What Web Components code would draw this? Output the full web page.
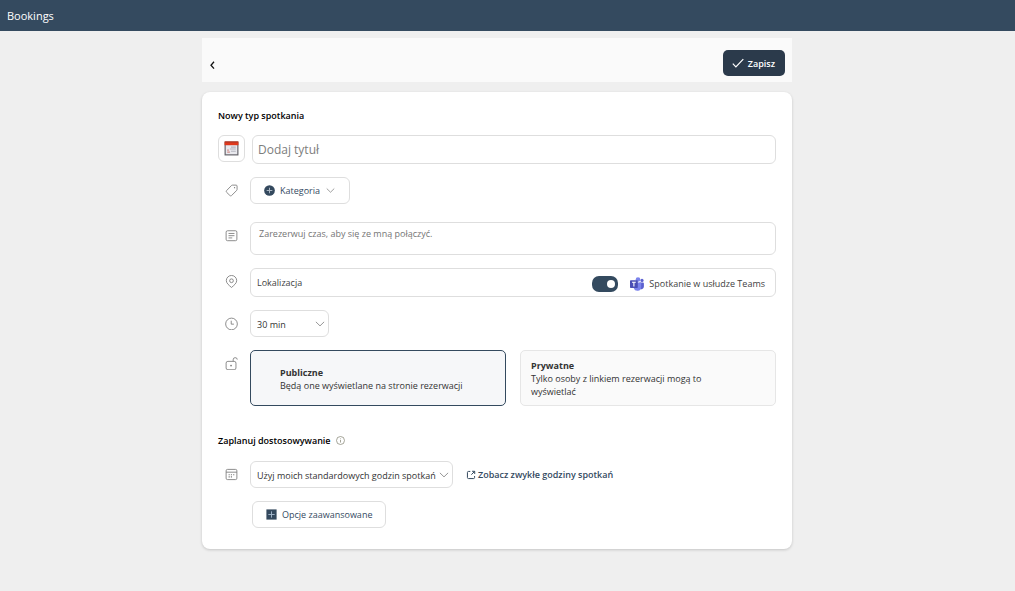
<!DOCTYPE html>
<html lang="pl">
<head>
<meta charset="utf-8">
<title>Bookings</title>
<meta name="viewport" content="width=device-width, initial-scale=1">
<style>
  :root {
    --brand: #344a5f;
    --brand-dark: #2b3a4b;
    --ink: #242424;
    --ink-soft: #424242;
    --muted: #757575;
    --line: #dedede;
    --radius: 6px;
  }
  * { box-sizing: border-box; }
  body {
    margin: 0;
    min-height: 100vh;
    background: #efefef;
    color: var(--ink);
    font: 400 9px/13px "Open Sans", "Noto Sans", sans-serif;
  }
</style>
</head>
<body>
<bookings-app></bookings-app>

<script>
const base = `*, *::before, *::after { box-sizing: border-box; }
  button, input, select, textarea { font: inherit; color: inherit; margin: 0; }`;

function define(name, html, setup) {
  const template = document.createElement('template');
  template.innerHTML = html.replace('<style>', '<style>' + base);
  customElements.define(name, class extends HTMLElement {
    constructor() {
      super();
      this.attachShadow({ mode: 'open' }).append(template.content.cloneNode(true));
    }
    connectedCallback() { if (setup) setup(this, this.shadowRoot); }
  });
}

/* Outline icons, drawn on a 14 x 14 grid */
const icons = {
  back: '<path d="M9 3.800 6 7.200l3 3.400" stroke="#111" stroke-width="1.300"/>',
  check: '<path d="m1.8 7.6 3.1 3.2 7.4-7.6" stroke="#fff" stroke-width="1.2"/>',
  calendar: '<path d="M.5.5h13v13H.5z" fill="#65646b" stroke="none"/><path d="M1.6 3.8h10.800v8.600H1.600z" fill="#e9e9ee" stroke="none"/><path d="M.5.5h13v3.400H.5z" fill="#e0381c" stroke="none"/><path d="M1 1h12" stroke="#a93a2c"/><path d="M3 10.400h2.500M3 8.600h1.500" stroke="#cf8a86" stroke-width="1.200"/><path d="M6.500 9.500h4.500M5.500 7.500h5.500M6.500 5.700h4.500" stroke="#b5b6c0" stroke-width="1"/>',
  tag: '<path d="M8 1.200h4c.6 0 1 .4 1 1v3.700c0 .4-.1.700-.4 1l-5.400 5.400c-.6.600-1.400.6-2 0L1.800 9c-.6-.6-.6-1.400 0-2L7 1.600c.3-.3.600-.4 1-.4z"/><circle cx="10.300" cy="4" r=".7" fill="#777" stroke="none"/>',
  note: '<rect x="1.200" y="1.900" width="11.600" height="10.700" rx="1.500"/><path d="M3.800 4.800h6.400M3.800 7.200h6.400M3.800 9.600h4"/>',
  pin: '<path d="M7 13.400C4.400 11.200 1.400 8.900 1.400 6.100a5.600 5.600 0 0 1 11.200 0c0 2.800-3 5.100-5.600 7.300z"/><circle cx="7" cy="6.200" r="2"/>',
  clock: '<circle cx="7" cy="7.500" r="6.300"/><path d="M6.700 4v3.700h2.900"/>',
  lock: '<rect x="1.200" y="4.700" width="10.600" height="9" rx="1.900"/><path d="M8.800 4.700V3a2.200 2.200 0 0 1 4.400-.2"/><circle cx="6.500" cy="9.200" r=".9" fill="#777" stroke="none"/>',
  schedule: '<rect x="1.200" y="1.500" width="11.600" height="11" rx="1.500"/><path d="M1.200 4.500h11.600"/><path d="M6.300 7.200h1.200M8.800 7.200H10M3.900 7.200h1.200M3.900 9.600h1.200M6.300 9.600h1.200" stroke-width="1.200"/>',
  down: '<path d="m2.200 4.500 4.800 4.700 4.800-4.700"/>',
  info: '<circle cx="7" cy="7" r="6.200" stroke="#8a8a7a" stroke-width="1.200"/><path d="M7 6.200v4M7 3.800v1.200" stroke="#8a8a7a" stroke-width="1.200"/>',
  plus: '<circle cx="7" cy="7" r="6.800" fill="#34495e" stroke="none"/><path d="M7 3.400v7.200M3.400 7h7.200" stroke="#a9b5c1" stroke-width="1.300"/>',
  plusbox: '<path d="M.5.5h13v13H.5z" fill="#34495e" stroke="none"/><path d="M7 3v8M3 7h8" stroke="#a4b8cc" stroke-width="1.200"/>',
  open: '<path d="M6 2H3.500C2.500 2 2 2.500 2 3.500v7c0 1 .5 1.500 1.500 1.500h7c1 0 1.500-.5 1.500-1.500V8.500M8.500 1.800h3.700v3.700M12 2 7.500 6.500" stroke="#34495e" stroke-width="1.400"/>',
  teams: '<circle cx="12" cy="3.400" r="1.600" fill="#5b60cf" stroke="none"/><circle cx="8" cy="2.500" r="2.300" fill="#7b83eb" stroke="none"/><path d="M9.500 5.600H13c.5 0 .9.400.9.900v3.100a2.600 2.600 0 0 1-4.400 1.900z" fill="#5b60cf" stroke="none"/><path d="M4.500 5.600h6c.4 0 .7.300.7.700v3.900a3.800 3.800 0 0 1-7.400 1z" fill="#7b83eb" stroke="none"/><rect x="0" y="3.200" width="7.800" height="7.800" rx=".7" fill="#4b4fb5" stroke="none"/><path d="M2 5.300h3.800M3.900 5.300v4.100" stroke="#fff" stroke-width="1.100"/>'
};

define('line-icon', `<style>
  :host { display: block; flex: none; width: var(--size, 14px); height: var(--size, 14px); pointer-events: none; }
  svg { display: block; width: 100%; height: 100%; fill: none; stroke: #777; stroke-width: .9; }
</style><svg viewBox="0 0 14 14" aria-hidden="true"></svg>`,
  (el, root) => { root.querySelector('svg').innerHTML = icons[el.getAttribute('name')]; });

define('top-bar', `<style>
  :host { display: block; background: var(--brand); color: #fff; padding: 7px; font-size: 11px; line-height: 17px; }
</style><slot></slot>`);

define('page-toolbar', `<style>
  :host { display: flex; justify-content: space-between; align-items: center; min-height: 44px; padding: 6px 7px 0 3px; background: #fafafa; }
  button { border: 0; cursor: pointer; display: flex; align-items: center; }
  .back { background: none; padding: 4px 0 0; }
  .save { gap: 3px; height: 26px; padding: 0 10px 0 8px; background: var(--brand-dark); color: #fff; border-radius: 5px; font-weight: 600; }
</style>
<button class="back" type="button" aria-label="Wstecz"><line-icon name="back"></line-icon></button>
<button class="save" type="submit"><line-icon name="check"></line-icon>Zapisz</button>`);

define('form-row', `<style>
  :host { display: flex; gap: 5px; }
  .lead { flex: none; width: 27px; height: 27px; display: grid; place-items: center; --size: 13px; }
  .body { flex: 1; min-width: 0; display: flex; align-items: center; }
</style><div class="lead"><slot name="icon"></slot></div><div class="body"><slot></slot></div>`);

define('title-field', `<style>
  :host { display: flex; gap: 7px; align-items: flex-start; }
  button { flex: none; width: 27px; height: 27px; padding: 0; display: grid; place-items: center; background: #fff; border: 1px solid var(--line); border-radius: var(--radius); --size: 15px; }
  input { flex: 1; min-width: 0; height: 29px; padding: 0 5px; font-size: 12px; border: 1px solid var(--line); border-radius: var(--radius); }
  input::placeholder { color: #7d7d7d; font-weight: 500; opacity: 1; }
</style>
<button type="button" aria-label="Wybierz ikonę"><line-icon name="calendar"></line-icon></button>
<input type="text" aria-label="Tytuł" placeholder="Dodaj tytuł">`);

define('outline-button', `<style>
  :host { display: block; }
  button { display: flex; align-items: center; gap: 5px; height: 27px; padding: 0 13px; background: #fff; color: var(--brand); font-weight: 500; border: 1px solid var(--line); border-radius: var(--radius); }
</style><button type="button"><slot></slot></button>`);

define('note-field', `<style>
  :host { display: block; flex: 1; }
  textarea { display: block; width: 100%; height: 33px; padding: 4px 8px; resize: none; background: #fff; border: 1px solid var(--line); border-radius: var(--radius); }
  textarea::placeholder { color: #757575; opacity: 1; }
</style><textarea aria-label="Opis" placeholder="Zarezerwuj czas, aby się ze mną połączyć."></textarea>`);

define('location-field', `<style>
  :host { flex: 1; min-width: 0; display: flex; align-items: center; height: 29px; padding: 0 10px 0 6px; background: #fff; border: 1px solid var(--line); border-radius: var(--radius); }
  .place { flex: 1; min-width: 0; padding: 0; border: 0; outline: 0; background: none; }
  .place::placeholder { color: var(--ink-soft); opacity: 1; }
  label { display: flex; align-items: center; padding-top: 2px; color: var(--ink-soft); font-weight: 500; }
  .switch { appearance: none; width: 26px; height: 16px; margin-right: 12px; padding: 4px; border-radius: 7px; background: var(--brand); display: flex; }
  .switch::before { content: ""; width: 8px; height: 8px; border-radius: 50%; background: #fff; }
  .switch:checked { justify-content: flex-end; padding-right: 3px; }
  line-icon { margin-right: 5px; }
</style>
<input class="place" type="text" aria-label="Lokalizacja" placeholder="Lokalizacja">
<label><input class="switch" type="checkbox" role="switch" checked><line-icon name="teams"></line-icon>Spotkanie w usłudze Teams</label>`);

define('select-field', `<style>
  :host { display: grid; align-items: center; }
  select, line-icon { grid-area: 1 / 1; }
  select { appearance: none; width: 100%; height: 27px; padding: 2px 12px 0 6px; color: #333; background: #fff; border: 1px solid var(--line); border-radius: var(--radius); }
  line-icon { justify-self: end; margin-right: 3px; --size: 12px; }
</style><select></select><line-icon name="down"></line-icon>`,
  (el, root) => {
    const select = root.querySelector('select');
    select.setAttribute('aria-label', el.getAttribute('label'));
    select.add(new Option(el.getAttribute('value')));
  });

define('visibility-choice', `<style>
  :host { flex: 1; display: grid; grid-template-columns: 1fr 1fr; gap: 14px; }
  label { position: relative; display: flex; flex-direction: column; justify-content: center; height: 56px; padding: 1px 29px 0; background: #fafafa; color: #333; border: 1px solid #e6e6e6; border-radius: 5px; }
  label:last-child { padding: 1px 39px 0 10px; }
  label:has(:checked) { background: #f6f7f9; border-color: var(--brand); }
  input { position: absolute; inset: 0; opacity: 0; width: 100%; height: 100%; }
  b { font-weight: 700; }
</style>
<label><input type="radio" name="visibility" checked><b>Publiczne</b><span>Będą one wyświetlane na stronie rezerwacji</span></label>
<label><input type="radio" name="visibility"><b>Prywatne</b><span>Tylko osoby z linkiem rezerwacji mogą to wyświetlać</span></label>`);

define('form-card', `<style>
  :host { display: block; padding: 17px 16px 21px; background: #fff; border-radius: 8px; box-shadow: 0 1px 3px rgb(0 0 0 / .18); }
</style><slot></slot>`);

define('bookings-app', `<style>
  :host { display: block; }
  main { padding: 7px 21px 24px 0; }
  .column { width: 100%; max-width: 590px; margin: 0 auto; }
  form-card { margin-top: 10px; }
  h2 { display: flex; align-items: center; gap: 5px; margin: 0; font-size: 9px; line-height: 13px; font-weight: 600; color: #000; }
  h2 line-icon { --size: 9px; }
  .fields { display: grid; gap: 13px; margin-top: 13px; }
  .describe { margin-top: 5px; }
  .schedule { margin-top: 28px; }
  .schedule + .fields { margin-top: 14px; }
  .duration { width: 79px; }
  .hours { width: 203px; }
  a { display: flex; align-items: center; gap: 2px; margin-left: 13px; color: var(--brand); font-weight: 600; text-decoration: none; --size: 10px; }
  .advanced { margin-left: 2px; }
  .glyph { --size: 11px; }
  .arrow { --size: 11px; }
</style>
<top-bar>Bookings</top-bar>
<main><div class="column">
  <page-toolbar></page-toolbar>
  <form-card>
    <h2>Nowy typ spotkania</h2>
    <div class="fields">
      <title-field></title-field>
      <form-row><line-icon slot="icon" name="tag"></line-icon>
        <outline-button><line-icon class="glyph" name="plus"></line-icon>Kategoria<line-icon class="arrow" name="down"></line-icon></outline-button></form-row>
      <form-row class="describe"><line-icon slot="icon" name="note"></line-icon><note-field></note-field></form-row>
      <form-row><line-icon slot="icon" name="pin"></line-icon><location-field></location-field></form-row>
      <form-row><line-icon slot="icon" name="clock"></line-icon><select-field class="duration" label="Czas trwania" value="30 min"></select-field></form-row>
      <form-row><line-icon slot="icon" name="lock"></line-icon><visibility-choice></visibility-choice></form-row>
    </div>
    <h2 class="schedule">Zaplanuj dostosowywanie <line-icon name="info"></line-icon></h2>
    <div class="fields">
      <form-row><line-icon slot="icon" name="schedule"></line-icon><select-field class="hours" label="Godziny spotkań" value="Użyj moich standardowych godzin spotkań"></select-field>
        <a href="#godziny"><line-icon name="open"></line-icon>Zobacz zwykłe godziny spotkań</a></form-row>
      <form-row><outline-button class="advanced"><line-icon class="glyph" name="plusbox"></line-icon>Opcje zaawansowane</outline-button></form-row>
    </div>
  </form-card>
</div></main>`);
</script>
</body>
</html>
